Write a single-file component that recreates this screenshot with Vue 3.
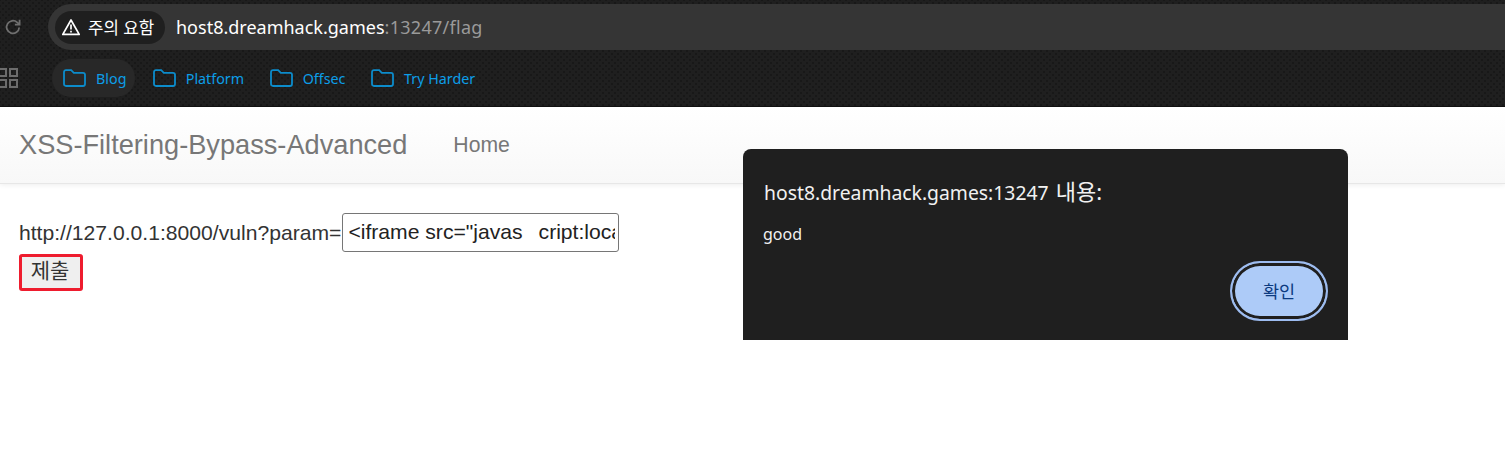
<template>
  <div class="page">
    <header class="browser">
      <div class="url-row">
        <svg class="reload" width="18" height="18" viewBox="0 0 18 18" fill="none" stroke="#6f6f6f" stroke-width="1.8">
          <path d="M15.2 9.5A6.3 6.3 0 1 1 13.2 4.4L15.4 6.3" />
          <path d="M15.6 1.8V6.6H10.9" />
        </svg>
        <div class="omnibox">
          <div class="chip">
            <svg width="20" height="18" viewBox="0 0 20 18" fill="none">
              <path d="M10 2 18.2 16.4H1.8Z" stroke="#fff" stroke-width="1.7" stroke-linejoin="round" />
              <path d="M10 6.6V11.6M10 12.8V14.6" stroke="#fff" stroke-width="1.7" />
            </svg>
            <span>주의 요함</span>
          </div>
          <div class="url"><span class="host">host8.dreamhack.games</span>:13247/flag</div>
        </div>
      </div>
      <div class="bookmarks">
        <svg class="apps" width="18" height="20" viewBox="0 0 18 20" fill="none" stroke="#6c6c6c" stroke-width="2">
          <rect x="-1" y="1" width="7" height="7" />
          <rect x="10" y="1" width="7" height="7" />
          <rect x="-1" y="12" width="7" height="7" />
          <rect x="10" y="12" width="7" height="7" />
        </svg>
        <a v-for="(b, i) in bookmarks" :key="b" :class="['mark', { active: i === 0 }]">
          <svg width="23" height="18" viewBox="0 0 23 18" fill="none" stroke="#0c8ccb" stroke-width="1.8">
            <path d="M1 3.2C1 2 1.8 1.2 3 1.2H8.2L10.8 3.8H20C21.2 3.8 22 4.6 22 5.8V15C22 16.2 21.2 17 20 17H3C1.8 17 1 16.2 1 15Z" />
          </svg>
          <span>{{ b }}</span>
        </a>
      </div>
    </header>

    <nav class="navbar">
      <span class="brand">XSS-Filtering-Bypass-Advanced</span>
      <a class="nav-link">Home</a>
    </nav>

    <main class="content">
      <div class="param-row">
        <span>http://127.0.0.1:8000/vuln?param=</span>
        <input class="param" type="text" :value="payload" readonly />
      </div>
      <button class="submit" type="button">제출</button>
    </main>

    <div class="dialog">
      <h2>host8.dreamhack.games:13247 <span class="ko">내용:</span></h2>
      <p>good</p>
      <div class="actions"><button type="button">확인</button></div>
    </div>
  </div>
</template>

<script setup>
const bookmarks = ['Blog', 'Platform', 'Offsec', 'Try Harder']
const payload = '<iframe src="javas\u00a0\u00a0\u2009cript:location.href=1">'
</script>

<style>
html, body { margin: 0; background: #fff; overflow: hidden; }
</style>

<style scoped>
.page { position: relative; width: 1505px; height: 449px; overflow: hidden; background: #fff; font-family: "Liberation Sans", "Noto Sans CJK KR", sans-serif; color: #333; }

.browser { height: 106px; border-bottom: 1px solid #111; background-color: #1f1f1f; background-image: radial-gradient(#181818 1px, transparent 1.2px), radial-gradient(#181818 1px, transparent 1.2px); background-size: 6px 6px; background-position: 0 0, 3px 3px; font-family: "Noto Sans", "Noto Sans CJK KR", sans-serif; }
.url-row { display: flex; align-items: center; height: 46px; padding-top: 4px; }
.reload { margin-left: 4px; flex: none; }
.omnibox { display: flex; align-items: center; flex: 1; height: 46px; margin-left: 26px; padding-left: 7px; border-radius: 23px 0 0 23px; background: #353535; }
.chip { display: flex; align-items: center; gap: 7px; width: 110px; height: 33px; box-sizing: border-box; padding-left: 6px; border-radius: 17px; background: #1f1f1f; color: #fff; font-size: 16.8px; white-space: nowrap; }
.url { margin-left: 11px; color: #9a9a9a; font-size: 18px; letter-spacing: .28px; }
.host { color: #fff; letter-spacing: 0; }

.bookmarks { display: flex; align-items: center; height: 38px; margin-top: 9px; }
.apps { flex: none; }
.mark { display: flex; align-items: center; gap: 10px; height: 38px; padding: 0 12.8px; color: #0c9ee8; font-size: 14.3px; }
.mark.active { margin-left: 34px; margin-right: 4.5px; padding: 0 9px 0 11px; border-radius: 19px; background: #282828; }

.navbar { display: flex; align-items: center; height: 77px; box-sizing: border-box; padding-left: 19px; border-bottom: 1px solid #e7e7e7; background: linear-gradient(#fff, #f8f8f8); box-shadow: 0 1px 5px rgba(0,0,0,.07); }
.brand { color: #777; font-size: 27.2px; }
.nav-link { margin-left: 46px; color: #777; font-size: 21.2px; }

.content { padding: 29px 19px 0; font-size: 21.13px; }
.param-row { display: flex; align-items: center; height: 39px; }
.param { width: 277px; height: 39px; box-sizing: border-box; margin: 0 0 0 1px; padding: 0 3px 2px 5px; border: 1px solid #767676; border-radius: 3px; outline: 0; background: #fff; color: #222; font: 21.13px "Liberation Sans", sans-serif; }
.submit { display: block; width: 64px; height: 37px; box-sizing: border-box; margin-top: 2px; padding: 0 2px 4px 0; border: 3px solid #ee1c2e; border-radius: 3px; background: #efefef; color: #333; font: 21px/22px "Liberation Sans", "Noto Sans CJK KR", sans-serif; }

.dialog { position: absolute; left: 743px; top: 149px; width: 605px; height: 191px; box-sizing: border-box; padding: 28px 21px 0; border-radius: 8px 8px 0 0; background: #1f1f1f; color: #f1f1f1; font-family: "Noto Sans", "Noto Sans CJK KR", sans-serif; }
.dialog h2 { margin: 0; font-size: 19.35px; font-weight: 400; line-height: 28px; }
.dialog .ko { margin-left: 2px; font-size: 22px; }
.dialog p { margin: 15px 0 0 -1px; font-size: 16px; line-height: 24px; }
.actions { position: absolute; right: 20px; bottom: 19px; }
.actions button { display: block; width: 98px; height: 60px; box-sizing: border-box; padding: 0 0 2px; border: 2px solid #9dbcf0; border-radius: 30px; background: #adcbf8; box-shadow: inset 0 0 0 3px #1f1f1f; color: #0b3a80; font: 17.5px "Noto Sans", "Noto Sans CJK KR", sans-serif; }
</style>
